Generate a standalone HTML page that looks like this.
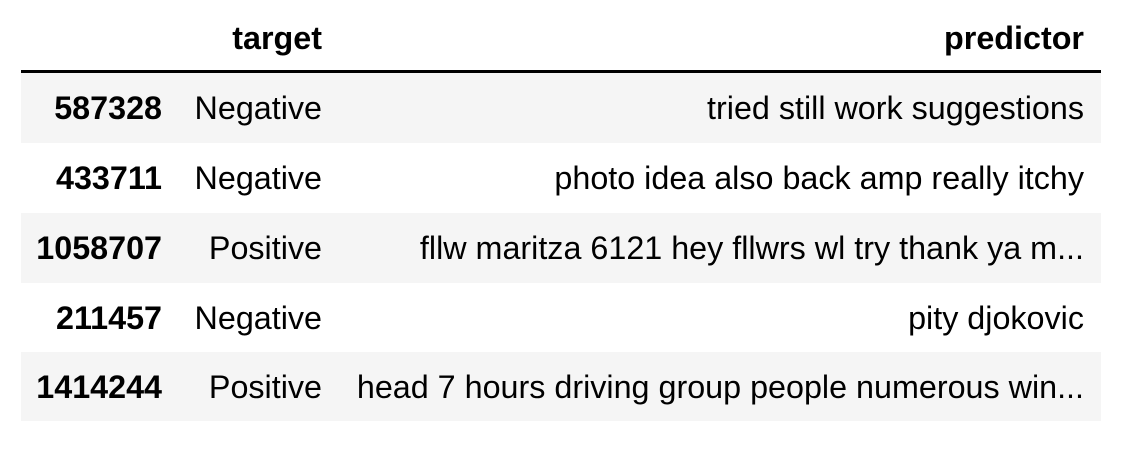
<!DOCTYPE html>
<html><head><meta charset="utf-8"><style>
html,body{margin:0;padding:0;background:#fff;width:1129px;height:450px;overflow:hidden}
body{font-family:"Liberation Sans",Arial,sans-serif;font-size:32.3px;color:#000}
.t{position:absolute;left:21px;top:0;width:1080px}
.r{position:absolute;left:0;width:1080px;height:70px}
.g{background:#f5f5f5}
.c{position:absolute;top:0;line-height:70px;text-align:right;white-space:nowrap}
.i{right:939px;font-weight:bold}
.a{right:779px}
.p{right:17px}
.hd{font-weight:bold}
.line{position:absolute;left:0;top:70px;width:1080px;height:3px;background:#000}
</style></head><body>
<div class="t">
<div class="r" style="top:0;height:70px"><div class="c a hd" style="line-height:76px">target</div><div class="c p hd" style="line-height:76px">predictor</div></div>
<div class="line"></div>
<div class="r g" style="top:73px"><div class="c i">587328</div><div class="c a">Negative</div><div class="c p">tried still work suggestions</div></div>
<div class="r" style="top:143px"><div class="c i">433711</div><div class="c a">Negative</div><div class="c p">photo idea also back amp really itchy</div></div>
<div class="r g" style="top:213px"><div class="c i">1058707</div><div class="c a">Positive</div><div class="c p">fllw maritza 6121 hey fllwrs wl try thank ya m...</div></div>
<div class="r" style="top:283px"><div class="c i">211457</div><div class="c a">Negative</div><div class="c p">pity djokovic</div></div>
<div class="r g" style="top:352px;height:69px"><div class="c i">1414244</div><div class="c a">Positive</div><div class="c p">head 7 hours driving group people numerous win...</div></div>
</div>
</body></html>
